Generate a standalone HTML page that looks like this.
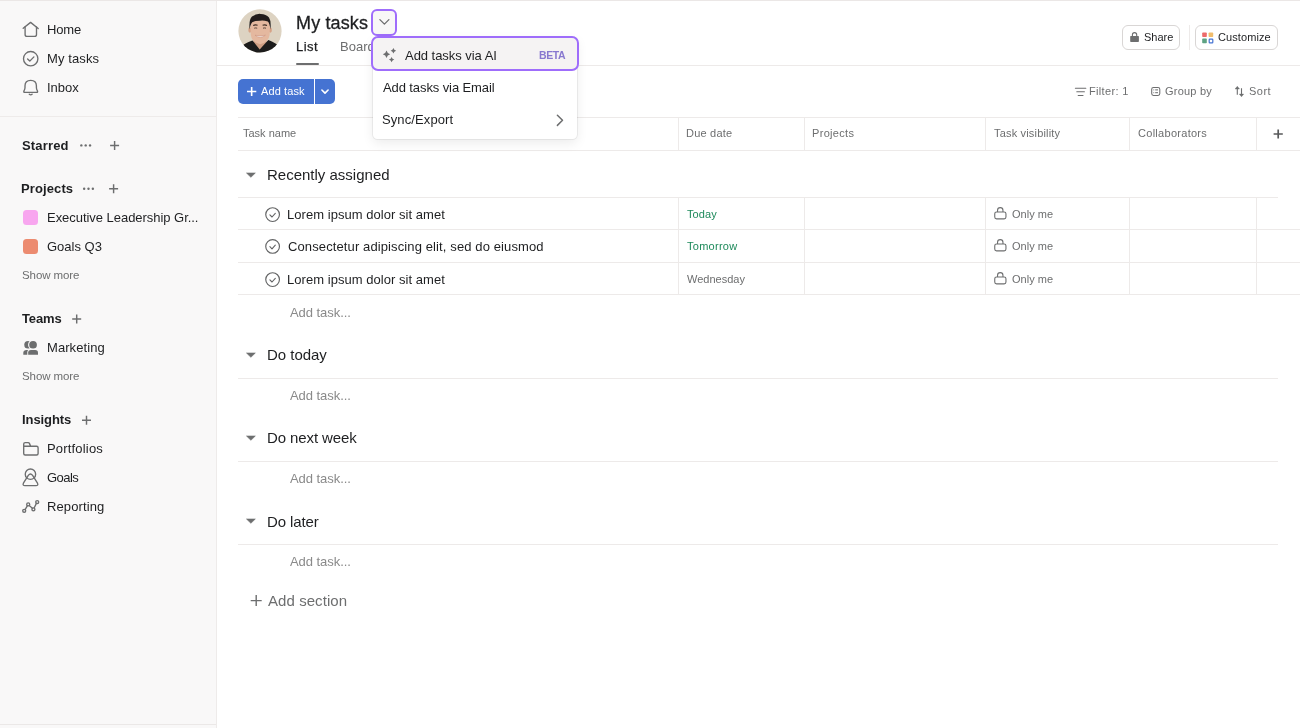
<!DOCTYPE html><html><head><meta charset="utf-8"><style>
html,body{margin:0;padding:0;width:1300px;height:728px;overflow:hidden;background:#fff;position:relative;font-family:"Liberation Sans",sans-serif;}
.t{position:absolute;white-space:nowrap;will-change:transform;}
svg{overflow:visible}
</style></head><body>
<div style="position:absolute;left:0px;top:0px;width:216px;height:728px;background:#f9f8f8"></div>
<div style="position:absolute;left:216px;top:0px;width:1px;height:728px;background:#eeebea"></div>
<div style="position:absolute;left:0px;top:724px;width:216px;height:1px;background:#ebe8e7"></div>
<div style="position:absolute;left:0px;top:116px;width:216px;height:1px;background:#eeebea"></div>
<div style="position:absolute;left:0px;top:0px;width:1300px;height:1px;background:#ebe7e6"></div>
<svg style="position:absolute;left:0px;top:0px" width="60" height="100" viewBox="0 0 60 100"><path d="M23.2 28.3 L30.6 22.4 L38.2 28.5" stroke="#6d6e6f" stroke-width="1.35" fill="none" stroke-linecap="round" stroke-linejoin="round"/><path d="M25.1 27 V34.4 Q25.1 36.4 27.1 36.4 H34.5 Q36.5 36.4 36.5 34.4 V27" stroke="#6d6e6f" stroke-width="1.35" fill="none" stroke-linecap="round" stroke-linejoin="round"/><circle cx="30.7" cy="58.7" r="7.2" stroke="#6d6e6f" stroke-width="1.35" fill="none" stroke-linecap="round" stroke-linejoin="round"/><path d="M27.6 59 L29.8 61.1 L33.9 56.9" stroke="#6d6e6f" stroke-width="1.35" fill="none" stroke-linecap="round" stroke-linejoin="round"/><path d="M24.8 92.3 H36.6 Q38.2 92.3 37.3 90.6 Q36.4 89.4 36.4 87.6 V85.8 Q36.4 80.3 30.7 80.3 Q25 80.3 25 85.8 V87.6 Q25 89.4 24.1 90.6 Q23.2 92.3 24.8 92.3 Z" stroke="#6d6e6f" stroke-width="1.35" fill="none" stroke-linecap="round" stroke-linejoin="round"/><path d="M29.3 94.3 Q30.7 95.5 32.1 94.3" stroke="#6d6e6f" stroke-width="1.35" fill="none" stroke-linecap="round" stroke-linejoin="round"/></svg>
<div class="t" style="left:46.50px;top:23.30px;font-size:13px;line-height:13px;color:#1e1f21;font-weight:400;letter-spacing:-0.167px;">Home</div>
<div class="t" style="left:46.50px;top:51.90px;font-size:13px;line-height:13px;color:#1e1f21;font-weight:400;letter-spacing:0.100px;">My tasks</div>
<div class="t" style="left:46.50px;top:81.10px;font-size:13px;line-height:13px;color:#1e1f21;font-weight:400;letter-spacing:0.000px;">Inbox</div>
<div class="t" style="left:22.20px;top:139.00px;font-size:13px;line-height:13px;color:#1e1f21;font-weight:700;letter-spacing:0.167px;">Starred</div>
<svg style="position:absolute;left:0px;top:100px" width="140" height="120" viewBox="0 0 140 120"><circle cx="81.35000000000001" cy="45.4" r="1.2" fill="#6d6e6f"/><circle cx="85.7" cy="45.4" r="1.2" fill="#6d6e6f"/><circle cx="90.05" cy="45.4" r="1.2" fill="#6d6e6f"/><path d="M110.1 45.5 H119.1 M114.6 41.0 V50.0" stroke="#6d6e6f" stroke-width="1.45" fill="none"/><circle cx="84.15" cy="88.8" r="1.2" fill="#6d6e6f"/><circle cx="88.5" cy="88.8" r="1.2" fill="#6d6e6f"/><circle cx="92.85" cy="88.8" r="1.2" fill="#6d6e6f"/><path d="M109.1 88.8 H118.1 M113.6 84.3 V93.3" stroke="#6d6e6f" stroke-width="1.45" fill="none"/></svg>
<div class="t" style="left:21.20px;top:182.00px;font-size:13px;line-height:13px;color:#1e1f21;font-weight:700;letter-spacing:0.114px;">Projects</div>
<div style="position:absolute;left:23.2px;top:210.3px;width:14.7px;height:14.6px;background:#f8a6ef;border-radius:3.5px"></div>
<div class="t" style="left:47.10px;top:211.30px;font-size:13px;line-height:13px;color:#1e1f21;font-weight:400;letter-spacing:-0.040px;">Executive Leadership Gr...</div>
<div style="position:absolute;left:23.2px;top:239.2px;width:14.7px;height:14.5px;background:#ec8b70;border-radius:3.5px"></div>
<div class="t" style="left:47.30px;top:239.80px;font-size:13px;line-height:13px;color:#1e1f21;font-weight:400;letter-spacing:0.000px;">Goals Q3</div>
<div class="t" style="left:22.00px;top:269.77px;font-size:11.5px;line-height:11.5px;color:#6d6e6f;font-weight:400;letter-spacing:-0.088px;">Show more</div>
<div class="t" style="left:22.20px;top:312.00px;font-size:13px;line-height:13px;color:#1e1f21;font-weight:700;letter-spacing:-0.125px;">Teams</div>
<svg style="position:absolute;left:0px;top:300px" width="140" height="60" viewBox="0 0 140 60"><path d="M72.2 19 H81.2 M76.7 14.5 V23.5" stroke="#6d6e6f" stroke-width="1.45" fill="none"/></svg>
<svg style="position:absolute;left:0px;top:300px" width="60" height="60" viewBox="0 0 60 60"><defs><mask id="tmask"><rect x="0" y="0" width="60" height="60" fill="#fff"/><circle cx="33.05" cy="44.75" r="5.0" fill="#000"/><path d="M27.3 55.5 V52.6 Q27.3 49 31 49 H35.2 Q38.9 49 38.9 52.8 V55.5 Z" fill="#000"/></mask></defs><g mask="url(#tmask)" fill="#6d6e6f"><circle cx="28.1" cy="44.75" r="3.85"/><path d="M23.3 54.8 V52.8 Q23.5 50 26.5 50 H31 V54.8 Z"/></g><circle cx="33.05" cy="44.75" r="3.85" fill="#6d6e6f"/><path d="M28.2 54.8 V52.6 Q28.2 50 31 50 H35.2 Q38 50 38 52.8 V54.8 Z" fill="#6d6e6f"/></svg>
<div class="t" style="left:46.70px;top:341.30px;font-size:13px;line-height:13px;color:#1e1f21;font-weight:400;letter-spacing:0.075px;">Marketing</div>
<div class="t" style="left:22.00px;top:370.67px;font-size:11.5px;line-height:11.5px;color:#6d6e6f;font-weight:400;letter-spacing:-0.088px;">Show more</div>
<div class="t" style="left:21.60px;top:413.30px;font-size:13px;line-height:13px;color:#1e1f21;font-weight:700;letter-spacing:-0.086px;">Insights</div>
<svg style="position:absolute;left:0px;top:400px" width="140" height="40" viewBox="0 0 140 40"><path d="M82.0 20.3 H91.0 M86.5 15.8 V24.8" stroke="#6d6e6f" stroke-width="1.45" fill="none"/></svg>
<svg style="position:absolute;left:0px;top:430px" width="60" height="100" viewBox="0 0 60 100"><path d="M23.7 16.2 V23.5 Q23.7 25 25.2 25 H36.6 Q38.1 25 38.1 23.5 V17.7 Q38.1 16.2 36.6 16.2 Z M23.7 16.2 V14.1 Q23.7 12.6 25.2 12.6 H28.2 Q29 12.6 29.4 13.4 L30.7 16.2" stroke="#6d6e6f" stroke-width="1.35" fill="none" stroke-linecap="round" stroke-linejoin="round"/><circle cx="30.45" cy="44.2" r="5.2" stroke="#6d6e6f" stroke-width="1.35" fill="none" stroke-linecap="round" stroke-linejoin="round"/><path d="M25 55.6 H36 Q38.6 55.6 37.5 53.2 L32.6 45.4 Q30.45 42.6 28.3 45.4 L23.4 53.2 Q22.3 55.6 25 55.6 Z" stroke="#6d6e6f" stroke-width="1.35" fill="none" stroke-linecap="round" stroke-linejoin="round"/><path d="M25.1 79.6 L27.3 75.8 M29.2 75.6 L32.4 78.2 M34.1 78 L36.4 73.4" stroke="#6d6e6f" stroke-width="1.35" fill="none" stroke-linecap="round" stroke-linejoin="round"/><circle cx="24.2" cy="80.8" r="1.5" stroke="#6d6e6f" stroke-width="1.35" fill="none" stroke-linecap="round" stroke-linejoin="round"/><circle cx="28.2" cy="74.4" r="1.5" stroke="#6d6e6f" stroke-width="1.35" fill="none" stroke-linecap="round" stroke-linejoin="round"/><circle cx="33.4" cy="79.3" r="1.5" stroke="#6d6e6f" stroke-width="1.35" fill="none" stroke-linecap="round" stroke-linejoin="round"/><circle cx="37.2" cy="72.1" r="1.5" stroke="#6d6e6f" stroke-width="1.35" fill="none" stroke-linecap="round" stroke-linejoin="round"/></svg>
<div class="t" style="left:46.70px;top:441.70px;font-size:13px;line-height:13px;color:#1e1f21;font-weight:400;letter-spacing:0.178px;">Portfolios</div>
<div class="t" style="left:47.40px;top:471.00px;font-size:13px;line-height:13px;color:#1e1f21;font-weight:400;letter-spacing:-0.525px;">Goals</div>
<div class="t" style="left:46.70px;top:499.50px;font-size:13px;line-height:13px;color:#1e1f21;font-weight:400;letter-spacing:0.112px;">Reporting</div>
<div style="position:absolute;left:216px;top:65px;width:1084px;height:1px;background:#edeae9"></div>
<svg style="position:absolute;left:238px;top:9px" width="44" height="44" viewBox="0 0 44 44">
<defs><clipPath id="av"><circle cx="22" cy="21.9" r="21.6"/></clipPath><filter id="blr" x="-10%" y="-10%" width="120%" height="120%"><feGaussianBlur stdDeviation="0.45"/></filter></defs>
<g clip-path="url(#av)">
<rect width="44" height="44" fill="#ddd3c2"/>
<g filter="url(#blr)">
<path d="M15.5 27 L15.5 36 L21.7 40.5 L28.5 36 L28.5 27 Z" fill="#cf9f84"/>
<path d="M0 44 L2 38 Q6 34.5 14.5 31.4 L21.7 40.4 L30.3 31 Q38 34 42 38 L44 44 Z" fill="#1c1b1b"/>
<ellipse cx="11.9" cy="21" rx="1.6" ry="2.8" fill="#d6a286"/>
<ellipse cx="32.3" cy="21" rx="1.6" ry="2.8" fill="#d6a286"/>
<path d="M12.4 15 Q12.4 9.5 22.2 9.5 Q32 9.5 32 15 L31.6 26 Q30.5 33.5 22.2 35.2 Q13.8 33.5 12.8 26 Z" fill="#e4b89f"/>
<path d="M11.6 20.5 Q10.6 11 14 7.6 Q18 4.6 22.5 4.9 Q28 4.8 31 8.4 Q33.4 12 32.4 20.5 Q31.6 14.2 29.8 12.6 Q25.5 11.2 22 11.8 Q17 11.8 14.2 13.2 Q12.4 15 11.6 20.5 Z" fill="#221e1d"/>
<path d="M15.2 16.4 Q17.2 15.4 19.6 16.2 M24.6 16.2 Q27 15.4 29 16.4" stroke="#3e2c24" stroke-width="1.1" fill="none"/>
<path d="M16.2 19.2 Q17.7 18.6 19.2 19.2 M25 19.2 Q26.5 18.6 28 19.2" stroke="#4d3a30" stroke-width="0.9" fill="none"/>
<path d="M17 26.2 Q22.2 30.4 27.4 26.2 Q22.2 27.6 17 26.2 Z" fill="#f4eeea" stroke="#c98c78" stroke-width="0.5"/>
</g>
</g></svg>
<div class="t" style="left:295.50px;top:13.56px;font-size:18px;line-height:18px;color:#1e1f21;font-weight:400;letter-spacing:0.143px;-webkit-text-stroke:0.3px #1e1f21">My tasks</div>
<div style="position:absolute;left:371px;top:9px;width:26px;height:26.6px;box-sizing:border-box;border:2px solid #9f6dfb;border-radius:6px;background:#f8f7f7"></div>
<svg style="position:absolute;left:371px;top:9px" width="26" height="26" viewBox="0 0 26 26"><path d="M8.9 10.6 L13.4 15.1 L17.9 10.6" stroke="#6d6e6f" stroke-width="1.3" fill="none" stroke-linecap="round" stroke-linejoin="round"/></svg>
<div class="t" style="left:295.80px;top:40.00px;font-size:13px;line-height:13px;color:#1e1f21;font-weight:400;letter-spacing:0.500px;-webkit-text-stroke:0.25px #1e1f21">List</div>
<div class="t" style="left:339.80px;top:40.00px;font-size:13px;line-height:13px;color:#6d6e6f;font-weight:400;letter-spacing:0.000px;">Board</div>
<div style="position:absolute;left:296.2px;top:63px;width:22.4px;height:2px;background:#6d6e6f;border-radius:1px"></div>
<div style="position:absolute;left:1122px;top:25px;width:58.4px;height:24.8px;box-sizing:border-box;border:1px solid #d9d6d5;border-radius:6px;background:#fff"></div>
<svg style="position:absolute;left:1122px;top:25px" width="20" height="25" viewBox="0 0 20 25"><rect x="8.2" y="11" width="8.7" height="5.9" rx="0.7" fill="#6d6e6f"/><path d="M10.4 11.2 V9.8 Q10.4 7.6 12.55 7.6 Q14.7 7.6 14.7 9.8 V11.2" stroke="#6d6e6f" stroke-width="1.1" fill="none"/></svg>
<div class="t" style="left:1144.00px;top:31.89px;font-size:11px;line-height:11px;color:#1e1f21;font-weight:400;letter-spacing:0.000px;">Share</div>
<div style="position:absolute;left:1188.5px;top:25px;width:1px;height:25px;background:#edeae9"></div>
<div style="position:absolute;left:1195.4px;top:25px;width:82.4px;height:24.8px;box-sizing:border-box;border:1px solid #d9d6d5;border-radius:6px;background:#fff"></div>
<svg style="position:absolute;left:1195.4px;top:25px" width="22" height="25" viewBox="0 0 22 25"><rect x="7.2" y="7.4" width="4.6" height="4.6" rx="0.8" fill="#ec6a6a"/><rect x="13.6" y="7.4" width="4.6" height="4.6" rx="0.8" fill="#f1bd6c"/><rect x="7.2" y="13.6" width="4.6" height="4.6" rx="0.8" fill="#5da283"/><rect x="14.2" y="14.2" width="3.6" height="3.6" rx="0.6" fill="none" stroke="#4573d2" stroke-width="1.2"/></svg>
<div class="t" style="left:1217.70px;top:31.89px;font-size:11px;line-height:11px;color:#1e1f21;font-weight:400;letter-spacing:0.088px;">Customize</div>
<div style="position:absolute;left:238.2px;top:78.8px;width:96.7px;height:25px;background:#4573d2;border-radius:5px"></div>
<div style="position:absolute;left:314px;top:79px;width:1px;height:25px;background:#ffffff"></div>
<svg style="position:absolute;left:238px;top:79px" width="100" height="25" viewBox="0 0 100 25"><path d="M9 12.5 H18.3 M13.65 8 V17" stroke="#fff" stroke-width="1.6" fill="none"/><path d="M83.9 11 L87 14.1 L90.1 11" stroke="#fff" stroke-width="1.6" fill="none" stroke-linecap="round" stroke-linejoin="round"/></svg>
<div class="t" style="left:261.40px;top:85.99px;font-size:11px;line-height:11px;color:#ffffff;font-weight:400;letter-spacing:0.114px;">Add task</div>
<svg style="position:absolute;left:1070px;top:80px" width="200" height="20" viewBox="0 0 200 20"><path d="M5.4 8.3 H15.8 M6.8 11.7 H14.4 M8.2 15.5 H13" stroke="#6d6e6f" stroke-width="1.1" fill="none" stroke-linecap="round"/><rect x="81.7" y="7.4" width="8.1" height="8" rx="1.8" stroke="#6d6e6f" stroke-width="1.05" fill="none"/><path d="M83.4 9.9 H84.2 M85.2 9.9 H88 M83.4 12.7 H84.2 M85.2 12.7 H88" stroke="#6d6e6f" stroke-width="1"/><path d="M167.3 8 V14.7 M171.5 8.3 V14.6" stroke="#6d6e6f" stroke-width="1.1" fill="none"/><path d="M165.1 9 L167.3 6.3 L169.5 9 Z M169.3 14.1 L171.5 16.7 L173.7 14.1 Z" fill="#6d6e6f" stroke="#6d6e6f" stroke-width="0.4" stroke-linejoin="round"/></svg>
<div class="t" style="left:1089.00px;top:85.79px;font-size:11px;line-height:11px;color:#6d6e6f;font-weight:400;letter-spacing:0.325px;">Filter: 1</div>
<div class="t" style="left:1165.30px;top:85.79px;font-size:11px;line-height:11px;color:#6d6e6f;font-weight:400;letter-spacing:0.214px;">Group by</div>
<div class="t" style="left:1249.00px;top:85.79px;font-size:11px;line-height:11px;color:#6d6e6f;font-weight:400;letter-spacing:0.500px;">Sort</div>
<div style="position:absolute;left:238px;top:117px;width:1062px;height:1px;background:#edeae9"></div>
<div style="position:absolute;left:238px;top:150px;width:1062px;height:1px;background:#edeae9"></div>
<div style="position:absolute;left:678px;top:117px;width:1px;height:33px;background:#edeae9"></div>
<div style="position:absolute;left:804px;top:117px;width:1px;height:33px;background:#edeae9"></div>
<div style="position:absolute;left:985px;top:117px;width:1px;height:33px;background:#edeae9"></div>
<div style="position:absolute;left:1129px;top:117px;width:1px;height:33px;background:#edeae9"></div>
<div style="position:absolute;left:1256px;top:117px;width:1px;height:33px;background:#edeae9"></div>
<div class="t" style="left:242.90px;top:128.19px;font-size:11px;line-height:11px;color:#6d6e6f;font-weight:400;letter-spacing:0.000px;">Task name</div>
<div class="t" style="left:685.50px;top:128.19px;font-size:11px;line-height:11px;color:#6d6e6f;font-weight:400;letter-spacing:0.214px;">Due date</div>
<div class="t" style="left:811.60px;top:128.19px;font-size:11px;line-height:11px;color:#6d6e6f;font-weight:400;letter-spacing:0.314px;">Projects</div>
<div class="t" style="left:993.50px;top:128.19px;font-size:11px;line-height:11px;color:#6d6e6f;font-weight:400;letter-spacing:0.179px;">Task visibility</div>
<div class="t" style="left:1137.50px;top:128.19px;font-size:11px;line-height:11px;color:#6d6e6f;font-weight:400;letter-spacing:0.283px;">Collaborators</div>
<svg style="position:absolute;left:1270px;top:126px" width="16" height="16" viewBox="0 0 16 16"><path d="M3.6 8 H12.8 M8.2 3.4 V12.6" stroke="#58595b" stroke-width="1.7" fill="none"/></svg>
<svg style="position:absolute;left:240px;top:168.8px" width="20" height="12" viewBox="0 0 20 12"><path d="M6.5 4 H15.3 L10.9 8.3 Z" fill="#6d6e6f" stroke="#6d6e6f" stroke-width="0.6" stroke-linejoin="round"/></svg>
<div class="t" style="left:267.00px;top:167.30px;font-size:15px;line-height:15px;color:#1e1f21;font-weight:400;letter-spacing:0.000px;">Recently assigned</div>
<div style="position:absolute;left:238px;top:197px;width:1040px;height:1px;background:#edeae9"></div>
<div style="position:absolute;left:238px;top:229px;width:1062px;height:1px;background:#edeae9"></div>
<div style="position:absolute;left:678px;top:197px;width:1px;height:32px;background:#edeae9"></div>
<div style="position:absolute;left:804px;top:197px;width:1px;height:32px;background:#edeae9"></div>
<div style="position:absolute;left:985px;top:197px;width:1px;height:32px;background:#edeae9"></div>
<div style="position:absolute;left:1129px;top:197px;width:1px;height:32px;background:#edeae9"></div>
<div style="position:absolute;left:1256px;top:197px;width:1px;height:32px;background:#edeae9"></div>
<svg style="position:absolute;left:262px;top:204px" width="20" height="20" viewBox="0 0 20 20"><circle cx="10.6" cy="10.60" r="6.85" stroke="#636465" stroke-width="1.15" fill="none"/><path d="M7.9 10.90 l2.1 2.1 l3.3 -3.7" stroke="#636465" stroke-width="1.1" fill="none" stroke-linecap="round" stroke-linejoin="round"/></svg>
<div class="t" style="left:286.80px;top:208.10px;font-size:13px;line-height:13px;color:#1e1f21;font-weight:400;letter-spacing:0.040px;">Lorem ipsum dolor sit amet</div>
<div class="t" style="left:686.80px;top:209.29px;font-size:11px;line-height:11px;color:#1e8a5b;font-weight:400;letter-spacing:0.075px;">Today</div>
<svg style="position:absolute;left:990px;top:204px" width="20" height="16" viewBox="0 0 20 16"><rect x="4.75" y="7.95" width="11.2" height="6.9" rx="1.8" stroke="#6d6e6f" stroke-width="1.1" fill="none"/><path d="M7.55 8 V6.3 Q7.55 3.65 10.25 3.65 Q12.95 3.65 12.95 6.3 V8" stroke="#6d6e6f" stroke-width="1.1" fill="none"/></svg>
<div class="t" style="left:1011.70px;top:209.29px;font-size:11px;line-height:11px;color:#6d6e6f;font-weight:400;letter-spacing:0.017px;">Only me</div>
<div style="position:absolute;left:238px;top:262px;width:1062px;height:1px;background:#edeae9"></div>
<div style="position:absolute;left:678px;top:229px;width:1px;height:33px;background:#edeae9"></div>
<div style="position:absolute;left:804px;top:229px;width:1px;height:33px;background:#edeae9"></div>
<div style="position:absolute;left:985px;top:229px;width:1px;height:33px;background:#edeae9"></div>
<div style="position:absolute;left:1129px;top:229px;width:1px;height:33px;background:#edeae9"></div>
<div style="position:absolute;left:1256px;top:229px;width:1px;height:33px;background:#edeae9"></div>
<svg style="position:absolute;left:262px;top:236px" width="20" height="20" viewBox="0 0 20 20"><circle cx="10.6" cy="10.40" r="6.85" stroke="#636465" stroke-width="1.15" fill="none"/><path d="M7.9 10.70 l2.1 2.1 l3.3 -3.7" stroke="#636465" stroke-width="1.1" fill="none" stroke-linecap="round" stroke-linejoin="round"/></svg>
<div class="t" style="left:287.80px;top:239.90px;font-size:13px;line-height:13px;color:#1e1f21;font-weight:400;letter-spacing:0.114px;">Consectetur adipiscing elit, sed do eiusmod</div>
<div class="t" style="left:686.80px;top:241.09px;font-size:11px;line-height:11px;color:#1e8a5b;font-weight:400;letter-spacing:0.271px;">Tomorrow</div>
<svg style="position:absolute;left:990px;top:236px" width="20" height="16" viewBox="0 0 20 16"><rect x="4.75" y="7.95" width="11.2" height="6.9" rx="1.8" stroke="#6d6e6f" stroke-width="1.1" fill="none"/><path d="M7.55 8 V6.3 Q7.55 3.65 10.25 3.65 Q12.95 3.65 12.95 6.3 V8" stroke="#6d6e6f" stroke-width="1.1" fill="none"/></svg>
<div class="t" style="left:1011.70px;top:241.09px;font-size:11px;line-height:11px;color:#6d6e6f;font-weight:400;letter-spacing:0.017px;">Only me</div>
<div style="position:absolute;left:238px;top:294px;width:1062px;height:1px;background:#edeae9"></div>
<div style="position:absolute;left:678px;top:262px;width:1px;height:32px;background:#edeae9"></div>
<div style="position:absolute;left:804px;top:262px;width:1px;height:32px;background:#edeae9"></div>
<div style="position:absolute;left:985px;top:262px;width:1px;height:32px;background:#edeae9"></div>
<div style="position:absolute;left:1129px;top:262px;width:1px;height:32px;background:#edeae9"></div>
<div style="position:absolute;left:1256px;top:262px;width:1px;height:32px;background:#edeae9"></div>
<svg style="position:absolute;left:262px;top:269px" width="20" height="20" viewBox="0 0 20 20"><circle cx="10.6" cy="10.60" r="6.85" stroke="#636465" stroke-width="1.15" fill="none"/><path d="M7.9 10.90 l2.1 2.1 l3.3 -3.7" stroke="#636465" stroke-width="1.1" fill="none" stroke-linecap="round" stroke-linejoin="round"/></svg>
<div class="t" style="left:286.80px;top:273.10px;font-size:13px;line-height:13px;color:#1e1f21;font-weight:400;letter-spacing:0.040px;">Lorem ipsum dolor sit amet</div>
<div class="t" style="left:686.80px;top:274.29px;font-size:11px;line-height:11px;color:#6d6e6f;font-weight:400;letter-spacing:0.013px;">Wednesday</div>
<svg style="position:absolute;left:990px;top:269px" width="20" height="16" viewBox="0 0 20 16"><rect x="4.75" y="7.95" width="11.2" height="6.9" rx="1.8" stroke="#6d6e6f" stroke-width="1.1" fill="none"/><path d="M7.55 8 V6.3 Q7.55 3.65 10.25 3.65 Q12.95 3.65 12.95 6.3 V8" stroke="#6d6e6f" stroke-width="1.1" fill="none"/></svg>
<div class="t" style="left:1011.70px;top:274.29px;font-size:11px;line-height:11px;color:#6d6e6f;font-weight:400;letter-spacing:0.017px;">Only me</div>
<div class="t" style="left:289.50px;top:306.20px;font-size:13px;line-height:13px;color:#8a8a8a;font-weight:400;letter-spacing:-0.050px;">Add task...</div>
<svg style="position:absolute;left:240px;top:348.8px" width="20" height="12" viewBox="0 0 20 12"><path d="M6.5 4 H15.3 L10.9 8.3 Z" fill="#6d6e6f" stroke="#6d6e6f" stroke-width="0.6" stroke-linejoin="round"/></svg>
<div class="t" style="left:267.00px;top:347.30px;font-size:15px;line-height:15px;color:#1e1f21;font-weight:400;letter-spacing:-0.029px;">Do today</div>
<div style="position:absolute;left:238px;top:378px;width:1040px;height:1px;background:#edeae9"></div>
<div class="t" style="left:289.50px;top:388.60px;font-size:13px;line-height:13px;color:#8a8a8a;font-weight:400;letter-spacing:-0.050px;">Add task...</div>
<svg style="position:absolute;left:240px;top:431.8px" width="20" height="12" viewBox="0 0 20 12"><path d="M6.5 4 H15.3 L10.9 8.3 Z" fill="#6d6e6f" stroke="#6d6e6f" stroke-width="0.6" stroke-linejoin="round"/></svg>
<div class="t" style="left:267.00px;top:430.30px;font-size:15px;line-height:15px;color:#1e1f21;font-weight:400;letter-spacing:-0.100px;">Do next week</div>
<div style="position:absolute;left:238px;top:461.3px;width:1040px;height:1px;background:#edeae9"></div>
<div class="t" style="left:289.50px;top:471.80px;font-size:13px;line-height:13px;color:#8a8a8a;font-weight:400;letter-spacing:-0.050px;">Add task...</div>
<svg style="position:absolute;left:240px;top:515.1999999999999px" width="20" height="12" viewBox="0 0 20 12"><path d="M6.5 4 H15.3 L10.9 8.3 Z" fill="#6d6e6f" stroke="#6d6e6f" stroke-width="0.6" stroke-linejoin="round"/></svg>
<div class="t" style="left:267.00px;top:513.70px;font-size:15px;line-height:15px;color:#1e1f21;font-weight:400;letter-spacing:-0.114px;">Do later</div>
<div style="position:absolute;left:238px;top:544.2px;width:1040px;height:1px;background:#edeae9"></div>
<div class="t" style="left:289.50px;top:554.90px;font-size:13px;line-height:13px;color:#8a8a8a;font-weight:400;letter-spacing:-0.050px;">Add task...</div>
<svg style="position:absolute;left:245px;top:590px" width="20" height="20" viewBox="0 0 20 20"><path d="M5.7 10.6 H16.7 M11.2 5.1 V16.1" stroke="#6d6e6f" stroke-width="1.4" fill="none"/></svg>
<div class="t" style="left:268.00px;top:592.80px;font-size:15px;line-height:15px;color:#6d6e6f;font-weight:400;letter-spacing:0.070px;">Add section</div>
<div style="position:absolute;left:372.8px;top:37px;width:204.2px;height:102px;background:#fff;border-radius:4.5px;box-shadow:0 0 0 1px rgba(0,0,0,0.06),0 4px 12px rgba(0,0,0,0.08)"></div>
<div style="position:absolute;left:371.2px;top:36.3px;width:207.8px;height:34.3px;box-sizing:border-box;border:2px solid #9f6dfb;border-radius:7px;background:#f5f3f3"></div>
<svg style="position:absolute;left:0px;top:0px" width="1" height="1" viewBox="0 0 1 1"><path d="M386.5 50.599999999999994 Q387.2 53.599999999999994 390.2 54.3 Q387.2 55.0 386.5 58.0 Q385.8 55.0 382.8 54.3 Q385.8 53.599999999999994 386.5 50.599999999999994 Z" fill="#6d6e6f"/><path d="M393.4 47.95 Q393.95 50.150000000000006 396.15 50.7 Q393.95 51.25 393.4 53.45 Q392.84999999999997 51.25 390.65 50.7 Q392.84999999999997 50.150000000000006 393.4 47.95 Z" fill="#6d6e6f"/><path d="M391.6 56.9 Q392.15000000000003 59.050000000000004 394.3 59.6 Q392.15000000000003 60.15 391.6 62.300000000000004 Q391.05 60.15 388.90000000000003 59.6 Q391.05 59.050000000000004 391.6 56.9 Z" fill="#6d6e6f"/></svg>
<div class="t" style="left:405.30px;top:49.10px;font-size:13px;line-height:13px;color:#1e1f21;font-weight:400;letter-spacing:-0.040px;">Add tasks via AI</div>
<div class="t" style="left:539.30px;top:49.71px;font-size:10.5px;line-height:10.5px;color:#8878cf;font-weight:700;letter-spacing:-0.433px;">BETA</div>
<div class="t" style="left:383.30px;top:80.80px;font-size:13px;line-height:13px;color:#1e1f21;font-weight:400;letter-spacing:-0.100px;">Add tasks via Email</div>
<div class="t" style="left:382.30px;top:113.00px;font-size:13px;line-height:13px;color:#1e1f21;font-weight:400;letter-spacing:0.100px;">Sync/Export</div>
<svg style="position:absolute;left:550px;top:110px" width="20" height="20" viewBox="0 0 20 20"><path d="M7.4 5.3 L12.5 10.3 L7.4 15.4" stroke="#6d6e6f" stroke-width="1.5" fill="none" stroke-linecap="round" stroke-linejoin="round"/></svg>
</body></html>
